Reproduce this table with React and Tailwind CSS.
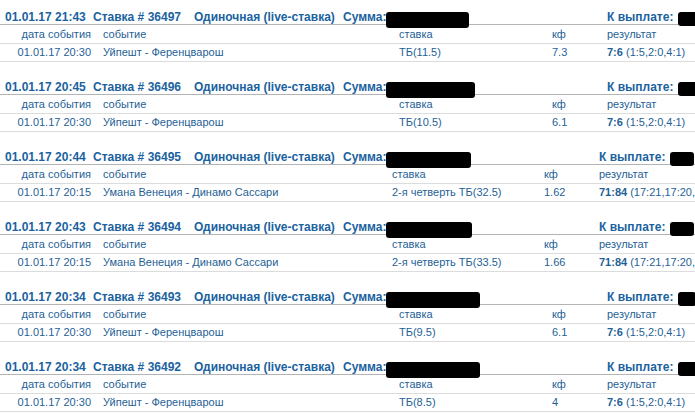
import React from 'react';

const bets = [
  { time: '01.01.17 21:43', id: '36497', eventTime: '01.01.17 20:30', event: 'Уйпешт - Ференцварош', bet: 'ТБ(11.5)', k: '7.3', score: '7:6', detail: '(1:5,2:0,4:1)', sum: 83, payout: 20, wide: false },
  { time: '01.01.17 20:45', id: '36496', eventTime: '01.01.17 20:30', event: 'Уйпешт - Ференцварош', bet: 'ТБ(10.5)', k: '6.1', score: '7:6', detail: '(1:5,2:0,4:1)', sum: 89, payout: 26, wide: false },
  { time: '01.01.17 20:44', id: '36495', eventTime: '01.01.17 20:15', event: 'Умана Венеция - Динамо Сассари', bet: '2-я четверть ТБ(32.5)', k: '1.62', score: '71:84', detail: '(17:21,17:20,18:22,19:21)', sum: 85, payout: 24, wide: true },
  { time: '01.01.17 20:43', id: '36494', eventTime: '01.01.17 20:15', event: 'Умана Венеция - Динамо Сассари', bet: '2-я четверть ТБ(33.5)', k: '1.66', score: '71:84', detail: '(17:21,17:20,18:22,19:21)', sum: 86, payout: 24, wide: true },
  { time: '01.01.17 20:34', id: '36493', eventTime: '01.01.17 20:30', event: 'Уйпешт - Ференцварош', bet: 'ТБ(9.5)', k: '6.1', score: '7:6', detail: '(1:5,2:0,4:1)', sum: 94, payout: 18, wide: false },
  { time: '01.01.17 20:34', id: '36492', eventTime: '01.01.17 20:30', event: 'Уйпешт - Ференцварош', bet: 'ТБ(8.5)', k: '4', score: '7:6', detail: '(1:5,2:0,4:1)', sum: 94, payout: 22, wide: false },
];

const BetBlock = ({ b }) => {
  const cols = b.wide
    ? 'grid-cols-[97px_289px_152px_55px_1fr]'
    : 'grid-cols-[97px_296px_153px_55px_1fr]';

  return (
    <div className="mb-[17px]">
      {/* шапка ставки */}
      <div className={`grid ${cols} h-[16px] border-b border-[#b4b4b4] font-bold text-[12px] text-[#1a62a0]`}>
        <div className="col-span-4 flex items-end pl-[5px] leading-[14px] whitespace-nowrap">
          <span className="w-[88px]">{b.time}</span>
          <span className="w-[101px]">Ставка # {b.id}</span>
          <span className="w-[149px]">Одиночная (live-ставка)</span>
          <span>Сумма:</span>
          <span className="relative">
            <span
              className="absolute left-0 top-[-12px] h-[16px] bg-black rounded-[3px] block"
              style={{ width: b.sum }}
            ></span>
          </span>
        </div>
        <div className="flex items-end pl-[6px] leading-[14px] whitespace-nowrap">
          <span>К выплате:</span>
          <span className="relative ml-[5px]">
            <span
              className="absolute left-0 top-[-12px] h-[14px] bg-black rounded-[3px] block"
              style={{ width: b.payout }}
            ></span>
          </span>
        </div>
      </div>

      {/* подписи колонок */}
      <div className={`grid ${cols} h-[19px] border-b border-[#dcdcdc] items-center`}>
        <div className="text-right pr-[6px]">дата события</div>
        <div className="pl-[6px]">событие</div>
        <div className="pl-[6px]">ставка</div>
        <div className="pl-[6px]">кф</div>
        <div className="pl-[6px]">результат</div>
      </div>

      {/* строка события */}
      <div className={`grid ${cols} h-[18px] border-b border-[#dcdcdc] items-center whitespace-nowrap`}>
        <div className="text-right pr-[6px]">{b.eventTime}</div>
        <div className="pl-[6px]">{b.event}</div>
        <div className="pl-[6px]">{b.bet}</div>
        <div className="pl-[6px]">{b.k}</div>
        <div className="pl-[6px]">
          <span className="font-bold">{b.score}</span> {b.detail}
        </div>
      </div>
    </div>
  );
};

export default function App() {
  return (
    <div className="w-[695px] h-[416px] overflow-hidden bg-white pt-[9px] text-[11px] text-[#1f5f96] font-['Liberation_Sans',Arial,sans-serif]">
      {bets.map(b => (
        <BetBlock key={b.id} b={b} />
      ))}
    </div>
  );
}
